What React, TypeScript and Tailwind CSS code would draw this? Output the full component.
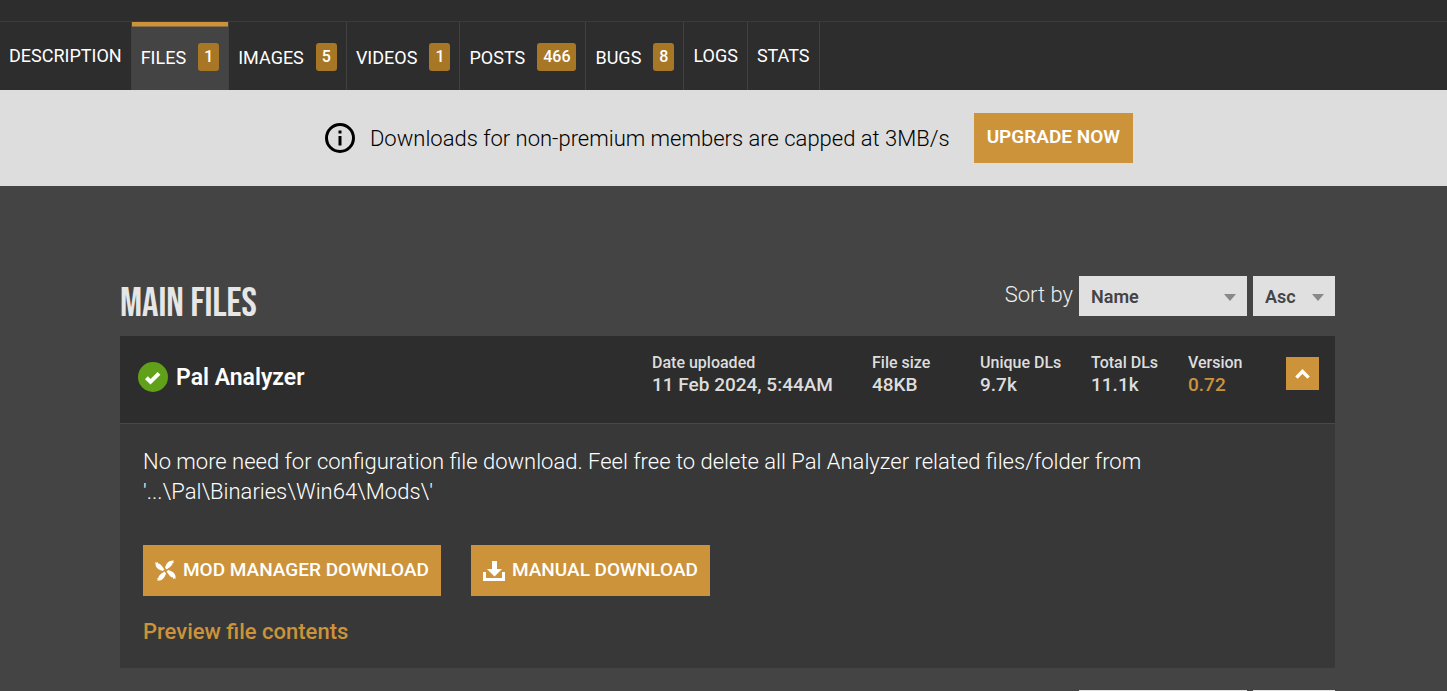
type Tab = { label: string; count?: string; active?: boolean };

const tabs: Tab[] = [
  { label: "DESCRIPTION" },
  { label: "FILES", count: "1", active: true },
  { label: "IMAGES", count: "5" },
  { label: "VIDEOS", count: "1" },
  { label: "POSTS", count: "466" },
  { label: "BUGS", count: "8" },
  { label: "LOGS" },
  { label: "STATS" },
];

const stats = [
  { label: "Date uploaded", value: "11 Feb 2024, 5:44AM" },
  { label: "File size", value: "48KB" },
  { label: "Unique DLs", value: "9.7k" },
  { label: "Total DLs", value: "11.1k" },
  { label: "Version", value: "0.72", accent: true },
];

function TabLink({ label, count, active }: Tab) {
  return (
    <a
      href="#"
      aria-current={active ? "page" : undefined}
      className={`relative flex h-[68px] items-center gap-3 border-r border-[#414141] px-[9px] text-lg text-white ${
        active ? "bg-[#444444]" : ""
      } ${count ? "pt-0.5" : ""}`}
    >
      {active && <span className="absolute inset-x-0 top-0 h-[5px] border-b border-[#8a6f43] bg-[#cc933a]" />}
      <span className={count ? "pt-0.5" : ""}>{label}</span>
      {count && (
        <span className="flex h-7 items-center rounded-[3px] bg-[#a87726] px-1.5 text-base font-medium">{count}</span>
      )}
    </a>
  );
}

function SortSelect({ id, label, options, size }: { id: string; label: string; options: string[]; size: string }) {
  return (
    <div className={`relative h-10 ${size}`}>
      <select
        id={id}
        aria-label={label}
        className="h-10 w-full appearance-none bg-[#e0e0e0] px-3 pt-0.5 text-lg font-semibold text-[#444444]"
      >
        {options.map((o) => (
          <option key={o}>{o}</option>
        ))}
      </select>
      <svg className="pointer-events-none absolute top-[18px] right-[11px]" width="12" height="7" viewBox="0 0 12 7" fill="#888888">
        <path d="M0 0h12L6 7z" />
      </svg>
    </div>
  );
}

function VortexIcon() {
  const blade = "M11.6 9.4 L10 7.800 C10.600 5.800 11.100 4.400 12.300 3 C13.600 1.300 15 .3 19 .4 L18.200 1.600 L19 2.500 L17.300 3.400 L17.200 4.700 C15.800 6.600 14 7.600 11.600 9.400Z";
  return (
    <svg width="21" height="21" viewBox="0 0 21 21" fill="#fff" aria-hidden="true">
      {[0, 90, 180, 270].map((a) => (
        <path key={a} d={blade} transform={`rotate(${a} 10.5 10.5)`} />
      ))}
    </svg>
  );
}

export default function App() {
  return (
    <div className="min-h-screen bg-[#444444] font-['Roboto',sans-serif] text-white">
      <header className="bg-[#2d2d2d] pt-[21px]">
        <nav className="flex border-t border-[#3b3b3b]">
          {tabs.map((t) => (
            <TabLink key={t.label} {...t} />
          ))}
        </nav>
      </header>

      <section className="flex h-24 items-center justify-center bg-[#dddddd] pl-[11px] text-black">
        <svg width="30" height="30" viewBox="0 0 30 30" fill="none" aria-hidden="true">
          <circle cx="15" cy="15" r="13.5" stroke="#000" strokeWidth="3" />
          <path d="M13.5 7.5h3v3h-3zM13.5 13h3v9.5h-3z" fill="#000" />
        </svg>
        <p className="ml-[15px] text-[22px] font-light">Downloads for non-premium members are capped at 3MB/s</p>
        <button type="button" className="ml-6 h-[50px] bg-[#cc933a] px-[13px] pb-0.5 text-[19px] font-semibold text-white">
          UPGRADE NOW
        </button>
      </section>

      <main className="pt-[90px] pr-28 pl-[120px]">
        <div className="flex h-[60px] items-start justify-between">
          <h1 className="pt-1 font-['Bebas_Neue','Liberation_Sans_Narrow',sans-serif] text-[41px] leading-[48px] font-light text-[#e6e6e6]">
            MAIN FILES
          </h1>
          <div className="flex gap-1.5">
            <label htmlFor="sort-by" className="pt-1 text-[22px] leading-[30px] font-light text-[#eeeeee]">
              Sort by
            </label>
            <SortSelect id="sort-by" label="Sort by" options={["Name", "Date uploaded", "Size"]} size="w-[168px]" />
            <SortSelect id="sort-order" label="Sort order" options={["Asc", "Desc"]} size="w-[82px]" />
          </div>
        </div>

        <article className="bg-[#383838]">
          <div className="flex h-[88px] justify-between border-b border-[#484848] bg-[#2d2d2d] pr-4 pl-[18px]">
            <div className="flex h-[82px] items-center gap-2">
              <svg width="30" height="30" viewBox="0 0 30 30" aria-hidden="true">
                <circle cx="15" cy="15" r="15" fill="#61a019" />
                <path d="M8.4 15.8l4.1 4L21 11.3" fill="none" stroke="#fff" strokeWidth="4" />
              </svg>
              <h2 className="pt-0.5 text-[23px] font-semibold">Pal Analyzer</h2>
            </div>
            <div className="flex">
              <dl className="grid grid-cols-[220px_108px_111px_97px_98px] pt-4 font-medium text-[#dddddd]">
                {stats.map((s) => (
                  <div key={s.label}>
                    <dt className="text-base leading-[22px]">{s.label}</dt>
                    <dd className={`text-[19px] leading-[22px] ${s.accent ? "text-[#cc933a]" : ""}`}>{s.value}</dd>
                  </div>
                ))}
              </dl>
              <button
                type="button"
                aria-label="Collapse file"
                className="mt-[21px] flex size-[33px] items-center justify-center bg-[#cc933a]"
              >
                <svg width="15" height="10" viewBox="0 0 15 10" fill="none" stroke="#fff" strokeWidth="3.4">
                  <path d="M1.4 8.6L7.5 2.5l6.1 6.1" />
                </svg>
              </button>
            </div>
          </div>

          <div className="px-[23px] pt-[23px] pb-[21px]">
            <p className="text-[22px] leading-[30px] font-light">
              No more need for configuration file download. Feel free to delete all Pal Analyzer related files/folder from
              <br />
              '...\Pal\Binaries\Win64\Mods\'
            </p>
            <div className="mt-[38px] flex gap-[30px]">
              <button type="button" className="flex h-[51px] items-center gap-[7px] bg-[#cc933a] px-3 text-[19px] font-medium">
                <VortexIcon />
                MOD MANAGER DOWNLOAD
              </button>
              <button type="button" className="flex h-[51px] items-center gap-[7px] bg-[#cc933a] px-3 text-[19px] font-medium">
                <svg width="22" height="20" viewBox="0 0 22 20" fill="#fff" aria-hidden="true">
                  <path d="M9 0h5v8h5l-7.500 7.500L4 8h5z" />
                  <path d="M0 11h3v6h16v-6h3v9H0z" />
                </svg>
                MANUAL DOWNLOAD
              </button>
            </div>
            <a href="#" className="mt-[21px] inline-block text-[22px] leading-[30px] font-medium text-[#cc933a]">
              Preview file contents
            </a>
          </div>
        </article>

        <div className="mt-[22px] flex justify-end gap-1.5">
          <div className="h-px w-[168px] bg-[#e0e0e0]" />
          <div className="h-px w-[82px] bg-[#e0e0e0]" />
        </div>
      </main>
    </div>
  );
}
